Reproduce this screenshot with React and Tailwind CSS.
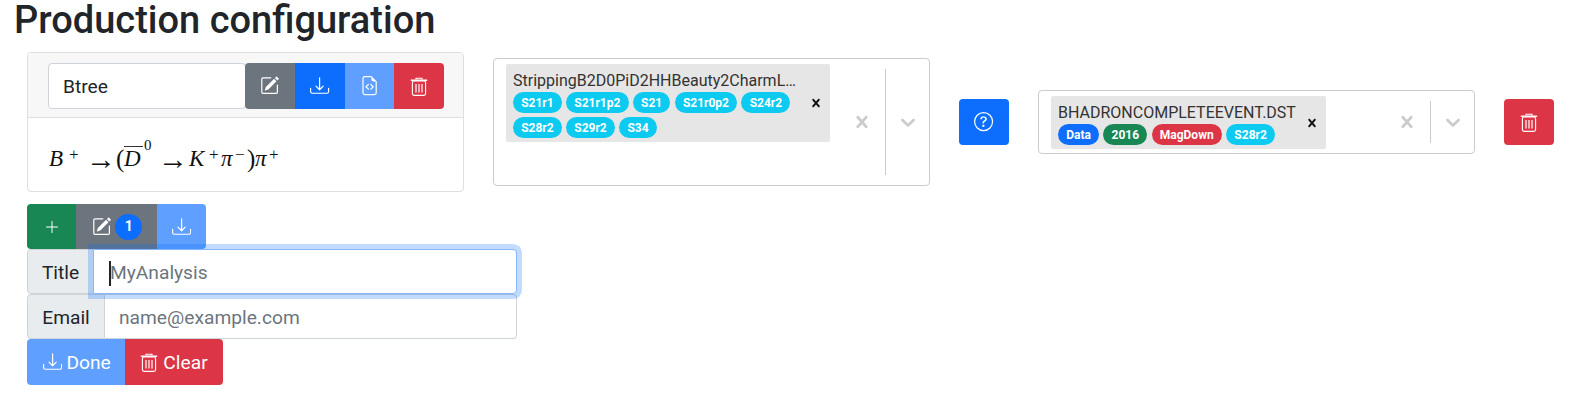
import React from "react";
import { BsPencilSquare, BsDownload, BsFileEarmarkCode, BsQuestionCircle, BsPlusLg } from "react-icons/bs";

const F = { fontFamily: "Roboto, sans-serif" };
const I = "w-[19.2px] h-[19.2px]";

function Trash({ cls = "w-[18px] h-[19px]" }) {
  return (
    <svg viewBox="0 0 18 19" className={cls} fill="none" stroke="currentColor" strokeWidth="1.1">
      <path d="M6 2.5V1.2h6v1.3" />
      <path d="M0.8 3.2h16.4" strokeWidth="1.4" />
      <rect x="2.4" y="4" width="13.2" height="14.4" rx="1.8" />
      <path d="M6 7v8.5M9 7v8.5M12 7v8.5" strokeWidth="1.2" />
    </svg>
  );
}

function Pill({ c, children }) {
  return <span className={`inline-block rounded-full ${c} text-white text-[12px] font-bold leading-[12px] px-[8.2px] pt-[4.5px] pb-[4.5px] h-[21px] mr-[4.3px] mb-[4px] align-top`}>{children}</span>;
}

function X({ cls }) {
  return <svg viewBox="0 0 20 20" className={cls} fill="currentColor"><path d="M14.348 14.849c-0.469 0.469-1.229 0.469-1.697 0l-2.651-3.030-2.651 3.029c-0.469 0.469-1.229 0.469-1.697 0-0.469-0.469-0.469-1.229 0-1.697l2.758-3.15-2.759-3.152c-0.469-0.469-0.469-1.228 0-1.697s1.228-0.469 1.697 0l2.652 3.031 2.651-3.031c0.469-0.469 1.228-0.469 1.697 0s0.469 1.229 0 1.697l-2.758 3.152 2.758 3.15c0.469 0.469 0.469 1.229 0 1.698z" /></svg>;
}
function Chev() {
  return <svg viewBox="0 0 20 20" className="w-6 h-6 text-[#cccccc]" fill="currentColor"><path d="M4.516 7.548c0.436-0.446 1.043-0.481 1.576 0l3.908 3.747 3.908-3.747c0.533-0.481 1.141-0.446 1.574 0 0.436 0.445 0.408 1.197 0 1.615-0.406 0.418-4.695 4.502-4.695 4.502-0.217 0.223-0.502 0.335-0.787 0.335s-0.57-0.112-0.789-0.335c0 0-4.287-4.084-4.695-4.502s-0.436-1.17 0-1.615z" /></svg>;
}

function Btn({ c, w, children }) {
  return <button className={`${c} ${w} flex items-center justify-center text-white h-[46px]`}>{children}</button>;
}

function Select({ height, chipWidth, title, pills, dividerH, top = "pt-[7px]" }) {
  return (
    <div className={`w-[437px] ${height} shrink-0 border border-[#cccccc] rounded-[4px] bg-white flex`}>
      <div className="flex-1 min-w-0 pl-[12px] pt-[5px] flex items-start">
        <div className={`${chipWidth} bg-[#e6e6e6] rounded-[2px] flex items-center`}>
          <div className={`flex-1 min-w-0 pl-[7px] ${top}`}>
            <div className="text-[16px] leading-[19px] text-[#333333] whitespace-nowrap">{title}</div>
            <div className="mt-[2px] flex flex-wrap">{pills}</div>
          </div>
          <X cls="w-[16px] h-[16px] text-[#111] mr-[6px] shrink-0" />
        </div>
      </div>
      <div className="flex items-center self-stretch shrink-0">
        <div className="w-[46px] flex justify-center"><X cls="w-6 h-6 text-[#cccccc]" /></div>
        <div className={`w-px ${dividerH} bg-[#cccccc]`} />
        <div className="w-[43px] flex justify-center"><Chev /></div>
      </div>
    </div>
  );
}

function Formula() {
  return (
    <div className="flex items-baseline pl-[21px] pt-[23px] text-[23px] leading-[32px] text-[#111] whitespace-nowrap" style={{ fontFamily: "'Liberation Serif', serif" }}>
      <i className="w-[20px]">B</i>
      <span className="w-[17px] text-[17px] relative -top-[6px]">+</span>
      <span className="w-[30px] text-[30px] font-light leading-none relative top-[3px]">→</span>
      <span className="w-[8px] text-[25px] leading-none relative top-[1px]">(</span>
      <i className="w-[20px] relative">D<span className="absolute left-0 right-[1px] top-[3px] h-px bg-[#333]" /></i>
      <span className="w-[14px] text-[15px] relative -top-[16px]">0</span>
      <span className="w-[31px] text-[30px] leading-none relative top-[3px]">→</span>
      <i className="w-[20px]">K</i>
      <span className="w-[12px] text-[17px] relative -top-[6px]">+</span>
      <i className="w-[14px]">π</i>
      <span className="w-[12px] text-[17px] relative -top-[6px]">−</span>
      <span className="w-[8px] text-[25px] leading-none relative top-[1px]">)</span>
      <i className="w-[14px]">π</i>
      <span className="w-[14px] text-[17px] relative -top-[6px]">+</span>
    </div>
  );
}

export default function App() {
  const cyan = "bg-[#0dcaf0]";
  return (
    <div style={F} className="w-[1578px] h-[406px] bg-white text-[#212529] overflow-hidden">
      <h1 className="text-[38px] leading-[40px] font-medium pl-[14px] mb-[12px] text-[#212529]">Production configuration</h1>
      <div className="flex items-center pl-[27px]">
        <div className="w-[437px] h-[140px] shrink-0 border border-[#dfdfdf] rounded-[4px] flex flex-col overflow-hidden">
          <div className="h-[65px] shrink-0 bg-[#f7f7f7] border-b border-[#dfdfdf] pl-[20px] pt-[10px] flex">
            <div className="w-[198px] h-[46px] bg-white border border-[#ced4da] rounded-[4px] pl-[14px] pt-[2px] flex items-center text-[19.2px]">Btree</div>
            <div className="flex overflow-hidden rounded-[4px] h-[46px] -ml-[1px]">
              <Btn c="bg-[#6c757d]" w="w-[50px]"><BsPencilSquare className={I} /></Btn>
              <Btn c="bg-[#0d6efd]" w="w-[50px]"><BsDownload className={I} /></Btn>
              <Btn c="bg-[#5f9fff]" w="w-[49px]"><BsFileEarmarkCode className={I} /></Btn>
              <Btn c="bg-[#dc3545]" w="w-[50px]"><Trash /></Btn>
            </div>
          </div>
          <Formula />
        </div>

        <div className="ml-[29px]">
          <Select
            height="h-[128px]"
            chipWidth="w-[324px]"
            dividerH="h-[106px]"
            title="StrippingB2D0PiD2HHBeauty2CharmL…"
            pills={["S21r1","S21r1p2","S21","S21r0p2","S24r2","S28r2","S29r2","S34"].map((t) => <Pill key={t} c={cyan}>{t}</Pill>)}
          />
        </div>

        <button className="ml-[29px] w-[50px] h-[46px] shrink-0 bg-[#0d6efd] rounded-[4px] flex items-center justify-center text-white">
          <BsQuestionCircle className={I} />
        </button>

        <div className="ml-[29px]">
          <Select
            height="h-[64px]"
            chipWidth="w-[275px]"
            dividerH="h-[42px]"
            title="BHADRONCOMPLETEEVENT.DST"
            pills={<>
              <Pill c="bg-[#0d6efd]">Data</Pill>
              <Pill c="bg-[#198754]">2016</Pill>
              <Pill c="bg-[#dc3545]">MagDown</Pill>
              <Pill c={cyan}>S28r2</Pill>
            </>}
          />
        </div>

        <button className="ml-[29px] w-[50px] h-[46px] shrink-0 bg-[#dc3545] rounded-[4px] flex items-center justify-center text-white">
          <Trash />
        </button>
      </div>

      <div className="pl-[27px] mt-[12px]">
        <div className="flex w-[179px] h-[45px] rounded-[4px] overflow-hidden">
          <div className="w-[49px] bg-[#198754] flex items-center justify-center text-white"><BsPlusLg className="w-[16px] h-[16px]" /></div>
          <div className="w-[81px] bg-[#6c757d] flex items-center text-white pl-[16px]">
            <BsPencilSquare className={I} />
            <span className="ml-[4px] w-[27px] h-[26px] rounded-full bg-[#0d6efd] text-[14px] font-bold flex items-center justify-center">1</span>
          </div>
          <div className="w-[49px] bg-[#5f9fff] flex items-center justify-center text-white"><BsDownload className={I} /></div>
        </div>

        <div className="flex w-[490px] h-[45px] relative">
          <div className="w-[67px] bg-[#e9ecef] border border-[#ced4da] rounded-l-[4px] pt-[3px] flex items-center justify-center text-[19.2px]">Title</div>
          <div className="relative flex-1 -ml-[1px] z-10 bg-white border border-[#86b7fe] rounded-r-[4px] pt-[3px] flex items-center pl-[15px] text-[19.2px] text-[#6c757d] shadow-[0_0_0_5px_rgba(13,110,253,0.25)]">
            <span className="w-[2px] h-[25px] bg-[#212529] -mr-[1px]" />
            <span>MyAnalysis</span>
          </div>
        </div>

        <div className="flex w-[490px] h-[45px]">
          <div className="w-[78px] bg-[#e9ecef] border border-[#ced4da] rounded-l-[4px] pt-[3px] flex items-center justify-center text-[19.2px]">Email</div>
          <div className="flex-1 bg-white border border-l-0 border-[#ced4da] rounded-r-[4px] pt-[3px] flex items-center pl-[14px] text-[19.2px] text-[#6c757d]">name@example.com</div>
        </div>

        <div className="flex w-[196px] h-[46px] rounded-[4px] overflow-hidden text-white text-[19.2px]">
          <div className="w-[98px] bg-[#5f9fff] pl-[2px] pt-[2px] flex items-center justify-center gap-[4px]"><BsDownload className={`${I} -mt-[2px]`} />Done</div>
          <div className="w-[98px] bg-[#dc3545] pt-[2px] flex items-center justify-center gap-[5px]"><Trash cls="w-[18px] h-[19px] -mt-[2px]" />Clear</div>
        </div>
      </div>
    </div>
  );
}
